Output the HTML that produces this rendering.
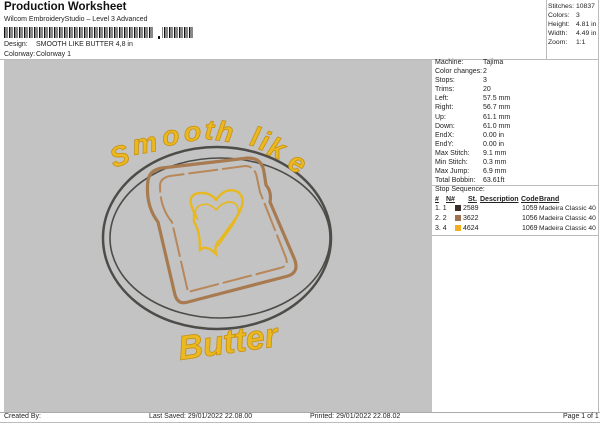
<!DOCTYPE html>
<html><head><style>
body{margin:0;width:600px;height:424px;background:#fff;font-family:"Liberation Sans",Arial,sans-serif;font-size:7px;color:#222;position:relative;overflow:hidden}
.a{position:absolute;white-space:nowrap}
.r{position:absolute;left:435px;white-space:nowrap}
.v{position:absolute;left:483px;white-space:nowrap}
</style></head><body>
<div class="a" style="left:4px;top:1px;font-size:11.5px;font-weight:bold;color:#111">Production Worksheet</div>
<div class="a" style="left:4px;top:16px;font-size:7px">Wilcom EmbroideryStudio – Level 3 Advanced</div>
<svg class="a" style="left:4px;top:27px" width="190" height="12">
<defs><pattern id="bc" width="5" height="11" patternUnits="userSpaceOnUse"><rect x="0" width="1.5" height="11" fill="#111"/><rect x="2.5" width="1" height="11" fill="#111"/></pattern></defs>
<rect x="0" y="0" width="150" height="11" fill="url(#bc)"/>
<rect x="154" y="9" width="2" height="3" fill="#111"/>
<rect x="158" y="0" width="32" height="11" fill="url(#bc)"/>
</svg>
<div class="a" style="left:4px;top:41px">Design:</div>
<div class="a" style="left:36px;top:41px">SMOOTH LIKE BUTTER 4,8 in</div>
<div class="a" style="left:4px;top:51px">Colorway:</div>
<div class="a" style="left:36px;top:51px">Colorway 1</div>
<div class="a" style="left:0;top:59px;width:432px;height:1px;background:#bbb"></div>
<div class="a" style="left:546px;top:0;width:1px;height:59px;background:#bbb"></div>
<div class="a" style="left:598px;top:0;width:1px;height:412px;background:#bbb"></div>
<div class="a" style="left:548px;top:2px;line-height:9px;font-size:6.8px">Stitches:<br>Colors:<br>Height:<br>Width:<br>Zoom:</div>
<div class="a" style="left:576px;top:2px;line-height:9px;font-size:6.8px">10837<br>3<br>4.81 in<br>4.49 in<br>1:1</div>
<div class="a" style="left:432px;top:59px;width:167px;height:1px;background:#bbb"></div>
<div class="a" style="left:4px;top:60px;width:428px;height:352px;background:#c3c3c3"></div>
<div class="a" style="left:0;top:412px;width:600px;height:1px;background:#aaa"></div>
<div class="a" style="left:0;top:422px;width:600px;height:1px;background:#bbb"></div>
<div class="r" style="top:58px;line-height:9.1px">Machine:<br>Color changes:<br>Stops:<br>Trims:<br>Left:<br>Right:<br>Up:<br>Down:<br>EndX:<br>EndY:<br>Max Stitch:<br>Min Stitch:<br>Max Jump:<br>Total Bobbin:</div>
<div class="v" style="top:58px;line-height:9.1px">Tajima<br>2<br>3<br>20<br>57.5 mm<br>56.7 mm<br>61.1 mm<br>61.0 mm<br>0.00 in<br>0.00 in<br>9.1 mm<br>0.3 mm<br>6.9 mm<br>63.61ft</div>
<div class="a" style="left:432px;top:185px;width:167px;height:1px;background:#bbb"></div>
<div class="r" style="top:186px">Stop Sequence:</div>
<div class="r" style="top:196px;font-weight:bold;text-decoration:underline">#</div>
<div class="a" style="left:446px;top:196px;font-weight:bold;text-decoration:underline">N#</div>
<div class="a" style="left:468px;top:196px;font-weight:bold;text-decoration:underline">St.</div>
<div class="a" style="left:480px;top:196px;font-weight:bold;text-decoration:underline">Description</div>
<div class="a" style="left:521px;top:196px;font-weight:bold;text-decoration:underline">Code</div>
<div class="a" style="left:539px;top:196px;font-weight:bold;text-decoration:underline">Brand</div>
<div class="r" style="top:204px;line-height:10px">1. 1<br>2. 2<br>3. 4</div>
<div class="a" style="left:455px;top:205px;width:6px;height:6px;background:#3a2e2a"></div>
<div class="a" style="left:455px;top:215px;width:6px;height:6px;background:#a07050"></div>
<div class="a" style="left:455px;top:225px;width:6px;height:6px;background:#f0b020"></div>
<div class="a" style="left:463px;top:204px;line-height:10px">2589<br>3622<br>4624</div>
<div class="a" style="left:522px;top:204px;line-height:10px">1059<br>1056<br>1069</div>
<div class="a" style="left:539px;top:204px;line-height:10px;font-size:6.7px">Madeira Classic 40<br>Madeira Classic 40<br>Madeira Classic 40</div>
<div class="a" style="left:432px;top:235px;width:167px;height:1px;background:#bbb"></div>
<div class="a" style="left:4px;top:413px">Created By:</div>
<div class="a" style="left:149px;top:413px">Last Saved: 29/01/2022 22.08.00</div>
<div class="a" style="left:310px;top:413px">Printed: 29/01/2022 22.08.02</div>
<div class="a" style="left:563px;top:413px">Page 1 of 1</div>
<svg class="a" style="left:4px;top:60px" width="428" height="352" viewBox="4 60 428 352">
<g fill="none" stroke="#4e4c48" stroke-width="2.5">
<ellipse cx="217" cy="238" rx="114" ry="91"/>
<ellipse cx="220" cy="238" rx="110" ry="80" stroke-width="1.6"/>
</g>
<g fill="none" stroke="#a87a50" stroke-width="3.2" stroke-linejoin="round">
<path d="M148 180 Q150 170 162 168 L248 158 Q262 158 264 172 L266 185 Q272 192 270 202 L294 258 Q300 272 288 276 L188 302 Q178 305 175 295 L158 222 Q145 205 148 180 Z"/>
<path d="M160 186 Q160 178 170 176 L245 166 Q255 166 257 178 L260 192 L286 258 Q289 266 280 268 L188 292 L172 222 Q160 208 160 186 Z" stroke="#b8875a" stroke-width="2" stroke-dasharray="30 4"/>
</g>
<g fill="none" stroke="#e8b820" stroke-width="2.4">
<path d="M194 212 Q184 192 204 193 Q212 194 216 200 Q226 186 238 192 Q248 200 236 218 L220 240 Q214 244 216 254 Q206 244 200 250 Q200 230 194 222 Z"/>
<path d="M198 220 Q190 206 206 204 Q212 205 216 210 Q226 198 236 204 Q242 212 232 226 L218 246" stroke-width="1.6"/>
</g>
<g font-family="Liberation Sans,sans-serif" font-style="italic" font-weight="bold" fill="#eab820" stroke="#c89010" stroke-width="0.8">
<text x="114" y="168" font-size="28" transform="rotate(-20 114 168)">S</text>
<text x="134" y="155" font-size="28" transform="rotate(-10 134 155)">m</text>
<text x="163" y="146" font-size="28" transform="rotate(-5 163 146)">o</text>
<text x="184" y="141" font-size="28">o</text>
<text x="204" y="139" font-size="28" transform="rotate(4 204 139)">t</text>
<text x="215" y="140" font-size="28" transform="rotate(8 215 140)">h</text>
<text x="249" y="145" font-size="28" transform="rotate(14 249 145)">l</text>
<text x="258" y="149" font-size="28" transform="rotate(18 258 149)">i</text>
<text x="266" y="154" font-size="28" transform="rotate(22 266 154)">k</text>
<text x="286" y="167" font-size="28" transform="rotate(30 286 167)">e</text>
<text x="180" y="360" font-size="34" transform="rotate(-8 180 360)">Butter</text>
</g>
</svg>
</body></html>
